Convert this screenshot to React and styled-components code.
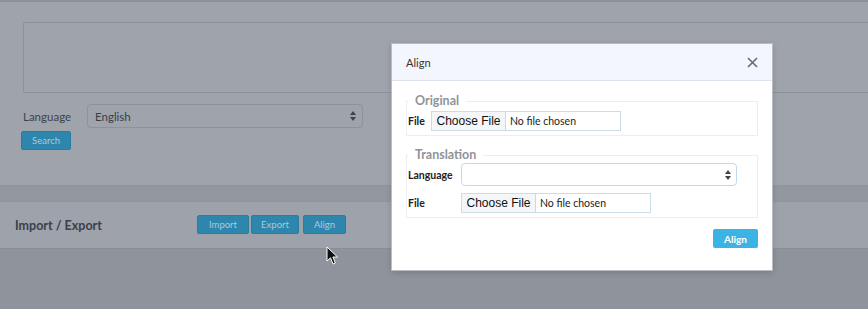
import styled, { createGlobalStyle } from 'styled-components';

const Global = createGlobalStyle`
    html, body {
        margin: 0;
        padding: 0;
        background: #8f939b;
        overflow: hidden;
        font-family: Lato, "Open Sans", sans-serif;
    }
    *{ box-sizing: border-box; }
`;

function FileInput(){
    return(
        <FileBox>
            <ChooseBtn>Choose File</ChooseBtn>
            <NoFile>No file chosen</NoFile>
        </FileBox>
    )
}

function SelectArrows({ color }){
    return(
        <svg width="6" height="10" viewBox="0 0 6 10">
            <path d="M3 0 L6 4 L0 4 Z" fill={color}/>
            <path d="M3 10 L6 6 L0 6 Z" fill={color}/>
        </svg>
    )
}

export default function App(){
    return(
        <>
            <Global/>
            <Page>
                <SearchPanel>
                    <TextBox/>
                    <LangRow>
                        <BgLabel>Language</BgLabel>
                        <BgSelect>
                            <span>English</span>
                            <SelectArrows color="#3e424a"/>
                        </BgSelect>
                    </LangRow>
                    <BgButton>Search</BgButton>
                </SearchPanel>
                <Gap/>
                <ImportPanel>
                    <PanelTitle>Import / Export</PanelTitle>
                    <ButtonGroup>
                        <BgButton $w="52px">Import</BgButton>
                        <BgButton $w="48px">Export</BgButton>
                        <BgButton $w="43px" $ml="2px">Align</BgButton>
                    </ButtonGroup>
                </ImportPanel>
            </Page>

            <Modal>
                <ModalHeader>
                    <ModalTitle>Align</ModalTitle>
                    <Close>
                        <svg width="11" height="11" viewBox="0 0 11 11">
                            <path d="M1 1 L10 10 M10 1 L1 10" stroke="#666a70" strokeWidth="1.6"/>
                        </svg>
                    </Close>
                </ModalHeader>
                <ModalBody>
                    <Fieldset>
                        <Legend>Original</Legend>
                        <FieldRow>
                            <FieldLabel $w="23px">File</FieldLabel>
                            <FileInput/>
                        </FieldRow>
                    </Fieldset>
                    <Fieldset $mt="13px">
                        <Legend>Translation</Legend>
                        <FieldRow $mt="2px">
                            <FieldLabel $w="53px">Language</FieldLabel>
                            <Select>
                                <SelectArrows color="#444"/>
                            </Select>
                        </FieldRow>
                        <FieldRow $mt="7px">
                            <FieldLabel $w="53px">File</FieldLabel>
                            <FileInput/>
                        </FieldRow>
                    </Fieldset>
                    <Footer>
                        <AlignButton>Align</AlignButton>
                    </Footer>
                </ModalBody>
            </Modal>

            <Cursor>
                <svg width="14" height="20" viewBox="0 0 14 20">
                    <path d="M1 1 L1 15 L4.5 11.8 L7 18 L9.3 17 L6.9 11 L11.5 11 Z" fill="#111" stroke="#fff" strokeWidth="1"/>
                </svg>
            </Cursor>
        </>
    )
}

const Page = styled.div`
    width: 100%;
    border-top: 2px solid #8c9098;
`

const SearchPanel = styled.div`
    height: 184px;
    background: #9fa3ab;
    padding: 20px 0 0 21px;
    border-bottom: 1px solid #90949c;
`

const TextBox = styled.div`
    margin-left: 2px;
    height: 71px;
    border: 1px solid #8d9199;
    border-right: none;
    border-radius: 2px 0 0 2px;
`

const LangRow = styled.div`
    display: flex;
    align-items: center;
    margin: 11px 0 0 2px;
`

const BgLabel = styled.div`
    width: 64px;
    font-size: 11.5px;
    color: #3f434b;
`

const BgSelect = styled.div`
    width: 276px;
    height: 24px;
    border: 1px solid #8e929a;
    border-radius: 4px;
    display: flex;
    align-items: center;
    justify-content: space-between;
    padding: 0 6px 0 7px;
    font-size: 11.5px;
    color: #3a3e46;
`

const BgButton = styled.div`
    width: ${p => p.$w || '50px'};
    height: 19px;
    margin-top: 3px;
    margin-left: ${p => p.$ml || '0'};
    background: #2e86ac;
    border: 1px solid #2a7ca0;
    border-radius: 2px;
    color: #a9cadb;
    font-size: 9.5px;
    display: flex;
    align-items: center;
    justify-content: center;
`

const Gap = styled.div`
    height: 15px;
    background: #93979f;
`

const ImportPanel = styled.div`
    height: 48px;
    background: #9ea2aa;
    border-top: 1px solid #90949c;
    border-bottom: 1px solid #8a8e96;
    display: flex;
    align-items: center;
    padding-left: 15px;
`

const PanelTitle = styled.div`
    width: 182px;
    font-size: 12.5px;
    font-weight: bold;
    color: #3b3f48;
`

const ButtonGroup = styled.div`
    display: flex;
    gap: 2px;
    margin-top: -5px;
`

const Modal = styled.div`
    position: absolute;
    left: 391px;
    top: 43px;
    width: 382px;
    height: 228px;
    background: #fff;
    border: 1px solid #b9bcc2;
    box-shadow: 0 2px 6px rgba(0,0,0,0.15);
`

const ModalHeader = styled.div`
    height: 37px;
    background: #f3f6fc;
    border-bottom: 1px solid #dde3ea;
    display: flex;
    align-items: center;
    justify-content: space-between;
    padding: 0 14px 0 14px;
`

const ModalTitle = styled.div`
    font-size: 11px;
    color: #333;
`

const Close = styled.div`
    display: flex;
    align-items: center;
`

const ModalBody = styled.div`
    padding: 14px 14px 0 14px;
`

const Fieldset = styled.fieldset`
    margin: ${p => p.$mt || '0'} 0 0 0;
    padding: 0 2px 4px 1px;
    border: 1px solid #eceef1;
`

const Legend = styled.legend`
    padding: 0 7px 0 7px;
    margin-left: 0;
    font-size: 12.5px;
    font-weight: bold;
    color: #909398;
    line-height: 12px;
`

const FieldRow = styled.div`
    display: flex;
    align-items: center;
    margin-top: ${p => p.$mt || '4px'};
`

const FieldLabel = styled.div`
    width: ${p => p.$w};
    font-size: 10.5px;
    font-weight: bold;
    color: #222;
`

const FileBox = styled.div`
    width: 190px;
    height: 20px;
    border: 1px solid #c9dde9;
    display: flex;
    align-items: stretch;
`

const ChooseBtn = styled.div`
    width: 74px;
    background: #f5f6f7;
    border-right: 1px solid #d4d6d9;
    font-family: "Liberation Sans", Arial, sans-serif;
    font-size: 12px;
    color: #111;
    display: flex;
    align-items: center;
    justify-content: center;
`

const NoFile = styled.div`
    padding-left: 4px;
    font-size: 10.5px;
    color: #222;
    display: flex;
    align-items: center;
`

const Select = styled.div`
    width: 276px;
    height: 23px;
    border: 1px solid #c3d9ea;
    border-radius: 4px;
    display: flex;
    align-items: center;
    justify-content: flex-end;
    padding-right: 5px;
`

const Footer = styled.div`
    display: flex;
    justify-content: flex-end;
    margin-top: 11px;
`

const AlignButton = styled.div`
    width: 45px;
    height: 19px;
    background: #3bb3e4;
    border-radius: 2px;
    color: #fff;
    font-size: 10px;
    font-weight: bold;
    display: flex;
    align-items: center;
    justify-content: center;
`

const Cursor = styled.div`
    position: absolute;
    left: 326px;
    top: 246px;
    line-height: 0;
`
